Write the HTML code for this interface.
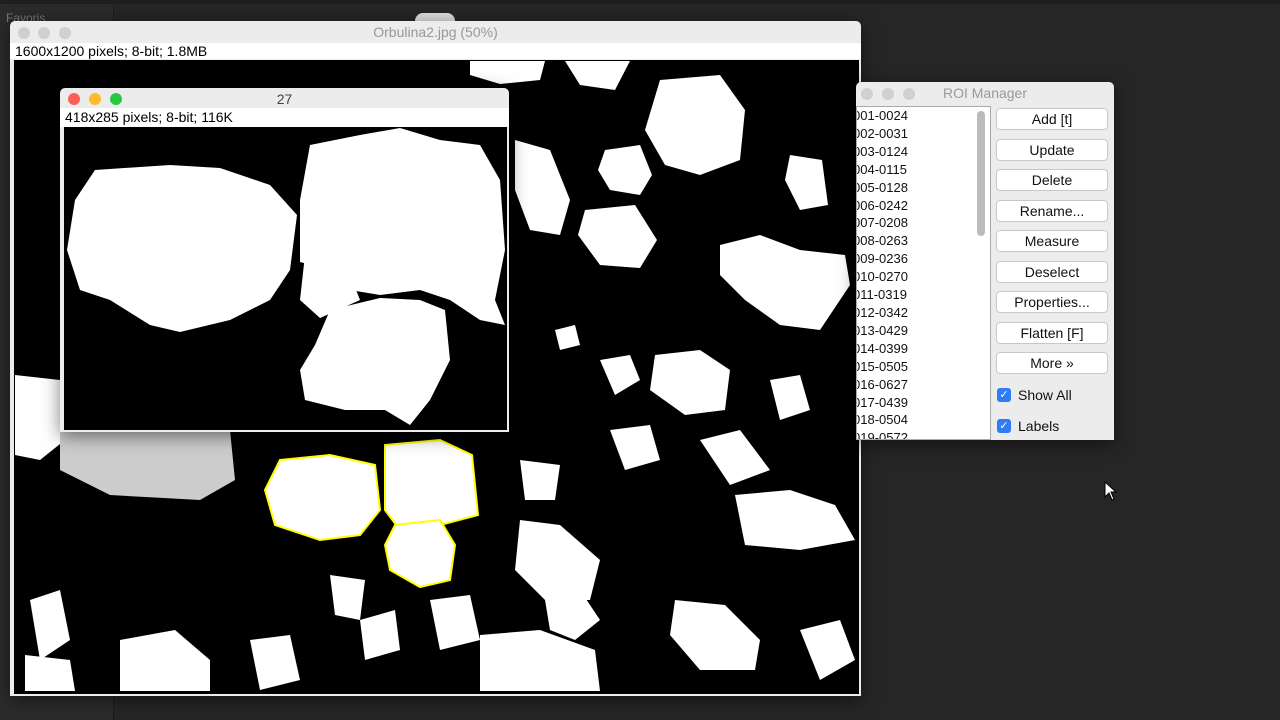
<!DOCTYPE html><html><head><style>
body{margin:0;width:1280px;height:720px;background:#262626;position:relative;overflow:hidden;font-family:"Liberation Sans",sans-serif}
.side{position:absolute;left:0;top:0;width:113px;height:720px;background:#2b2b2b;border-right:1px solid #1c1c1c}
.top{position:absolute;left:0;top:0;width:1280px;height:4px;background:#1e1e1e}
.win{position:absolute;background:#ececec;border-radius:5px 5px 0 0;box-shadow:0 4px 18px rgba(0,0,0,.5)}
.tb{height:22px;text-align:center;font-size:14px;line-height:22px;color:#999}
.dot{position:absolute;top:6px;width:12px;height:12px;border-radius:50%;background:#d0d0d0}
.info{font-size:14px;color:#000;background:#fff;padding-left:5px;height:16px;line-height:16px}
.btn{position:absolute;left:996px;width:110px;height:20px;background:#fff;border:1px solid #c8c8c8;border-radius:4px;font-size:14px;text-align:center;line-height:20px;color:#111}
.cb{position:absolute;left:997px;width:14px;height:14px;background:#2f7cf6;border-radius:3px;color:#fff;font-size:11px;text-align:center;line-height:14px}
.lbl{position:absolute;left:1018px;font-size:14px;color:#111}
</style></head><body>
<div class="side"><div style="color:#777;font-size:12px;position:absolute;left:6px;top:11px">Favoris</div></div>
<div class="top"></div>
<div style="position:absolute;left:415px;top:13px;width:40px;height:10px;background:#ddd;border-radius:8px 8px 0 0"></div>

<div class="win" style="left:10px;top:21px;width:851px;height:675px">
<div class="tb">Orbulina2.jpg (50%)</div>
<div class="dot" style="left:8px"></div><div class="dot" style="left:28px"></div><div class="dot" style="left:49px"></div>
<div class="info" style="background:#fff">1600x1200 pixels; 8-bit; 1.8MB</div>
<div style="position:absolute;left:4px;top:39px;width:843px;height:632px;border:1px solid #000;background:#fff">
<svg width="843" height="632" viewBox="15 61 843 632" style="display:block">
<rect x="15" y="61" width="843" height="632" fill="#000"/>
<g fill="#fff">
<path d="M470 61 L545 61 540 80 500 84 470 75Z"/><path d="M565 61 L630 61 615 90 580 85Z"/>
<path d="M660 80 L720 75 745 110 740 160 700 175 665 165 645 130Z"/>
<path d="M605 150 L640 145 652 175 640 195 610 190 598 170Z"/>
<path d="M585 210 L635 205 657 240 640 268 600 265 578 235Z"/>
<path d="M515 140 L550 150 570 200 560 235 530 230 515 190Z"/>
<path d="M790 155 L822 160 828 205 800 210 785 180Z"/>
<path d="M720 245 L760 235 800 250 845 255 850 285 820 330 780 325 745 300 720 275Z"/>
<path d="M655 355 L700 350 730 370 725 410 685 415 650 390Z"/>
<path d="M735 495 L790 490 835 505 855 540 800 550 745 545Z"/>
<path d="M675 600 L725 605 760 640 755 670 700 670 670 635Z"/>
<path d="M480 635 L540 630 595 650 600 691 480 691Z"/>
<path d="M520 520 L560 525 600 560 590 600 545 600 515 570Z"/>
<path d="M15 375 L60 380 65 440 40 460 15 455Z"/>
<path d="M120 640 L175 630 210 660 210 691 120 691Z"/>
<path d="M545 600 L580 590 600 620 575 640 550 630Z"/>
<path d="M600 360 L630 355 640 380 615 395Z"/>
<path d="M770 380 L800 375 810 410 780 420Z"/>
<path d="M30 600 L60 590 70 640 40 660Z"/>
<path d="M330 575 L365 580 360 620 335 615Z"/>
<path d="M360 620 L395 610 400 650 365 660Z"/>
<path d="M430 600 L470 595 480 640 440 650Z"/>
<path d="M25 655 L70 660 75 691 25 691Z"/>
<path d="M250 640 L290 635 300 680 260 690Z"/>
<path d="M800 630 L840 620 855 660 820 680Z"/>
<path d="M700 440 L740 430 770 470 730 485Z"/>
<path d="M520 460 L560 465 555 500 525 500Z"/>
<path d="M610 430 L650 425 660 460 625 470Z"/>
<path d="M555 330 L575 325 580 345 560 350Z"/>
</g>
<g fill="#ccc"><path d="M60 430 L230 430 235 480 200 500 110 495 60 470Z"/></g>
<g fill="#fff" stroke="#ffff00" stroke-width="2">
<path d="M280 460 L330 455 375 465 380 510 360 535 320 540 275 525 265 490Z"/>
<path d="M385 445 L440 440 472 455 478 515 440 525 400 530 385 510Z"/>
<path d="M395 525 L440 520 455 545 450 580 420 587 390 570 385 545Z"/>
</g>
</svg></div>
</div>

<div class="win" style="left:60px;top:88px;width:449px;height:344px;background:#ececec">
<div class="tb" style="height:20px;line-height:22px;color:#444">27</div>
<div class="dot" style="left:8px;top:5px;background:#fc5f57"></div><div class="dot" style="left:29px;top:5px;background:#fdbc2e"></div><div class="dot" style="left:50px;top:5px;background:#28c840"></div>
<div class="info" style="background:#fff;height:19px;line-height:19px">418x285 pixels; 8-bit; 116K</div>
<div style="position:absolute;left:4px;top:39px;width:441px;height:301px;border:1px solid #000;background:#000">
<svg width="441" height="301" viewBox="65 128 441 301" style="display:block">
<rect x="65" y="128" width="441" height="301" fill="#000"/>
<g fill="#fff">
<path d="M95 170 L170 165 220 168 270 185 297 215 290 270 270 300 230 320 180 332 150 325 110 300 80 290 67 250 75 200Z"/>
<path d="M310 145 L360 135 400 128 440 140 480 145 500 180 505 250 495 300 505 325 480 320 450 300 420 290 380 295 350 290 330 270 300 262 300 200Z"/>
<path d="M305 255 L345 262 360 300 320 318 300 300Z"/>
<path d="M330 310 L380 298 420 300 445 310 450 360 430 400 410 425 385 410 345 410 305 400 300 370 315 345Z"/>
</g>
</svg></div>
</div>

<div class="win" style="left:856px;top:82px;width:258px;height:358px;background:#ececec">
<div class="tb" style="color:#999">ROI Manager</div>
<div class="dot" style="left:5px"></div><div class="dot" style="left:26px"></div><div class="dot" style="left:47px"></div>
<div style="position:absolute;left:0;top:24px;width:133px;height:332px;background:#fff;border:1px solid #aaa;overflow:hidden;font-size:13px;line-height:17.9px;color:#111">
<div style="padding-left:2px;margin-left:-6px">001-0024<br>002-0031<br>003-0124<br>004-0115<br>005-0128<br>006-0242<br>007-0208<br>008-0263<br>009-0236<br>010-0270<br>011-0319<br>012-0342<br>013-0429<br>014-0399<br>015-0505<br>016-0627<br>017-0439<br>018-0504<br>019-0572</div>
<div style="position:absolute;left:120px;top:4px;width:8px;height:125px;background:#bbb;border-radius:4px"></div>
</div></div>
<div class="btn" style="top:108px">Add [t]</div>
<div class="btn" style="top:139px">Update</div>
<div class="btn" style="top:169px">Delete</div>
<div class="btn" style="top:200px">Rename...</div>
<div class="btn" style="top:230px">Measure</div>
<div class="btn" style="top:261px">Deselect</div>
<div class="btn" style="top:291px">Properties...</div>
<div class="btn" style="top:322px">Flatten [F]</div>
<div class="btn" style="top:352px">More »</div>
<div class="cb" style="top:388px">✓</div><div class="lbl" style="top:387px">Show All</div>
<div class="cb" style="top:419px">✓</div><div class="lbl" style="top:418px">Labels</div>
<svg style="position:absolute;left:1104px;top:481px" width="14" height="20"><path d="M1 1 L1 16 L5 12 L8 19 L10 18 L7 11 L12 11Z" fill="#fff" stroke="#000" stroke-width="1"/></svg>
</body></html>
